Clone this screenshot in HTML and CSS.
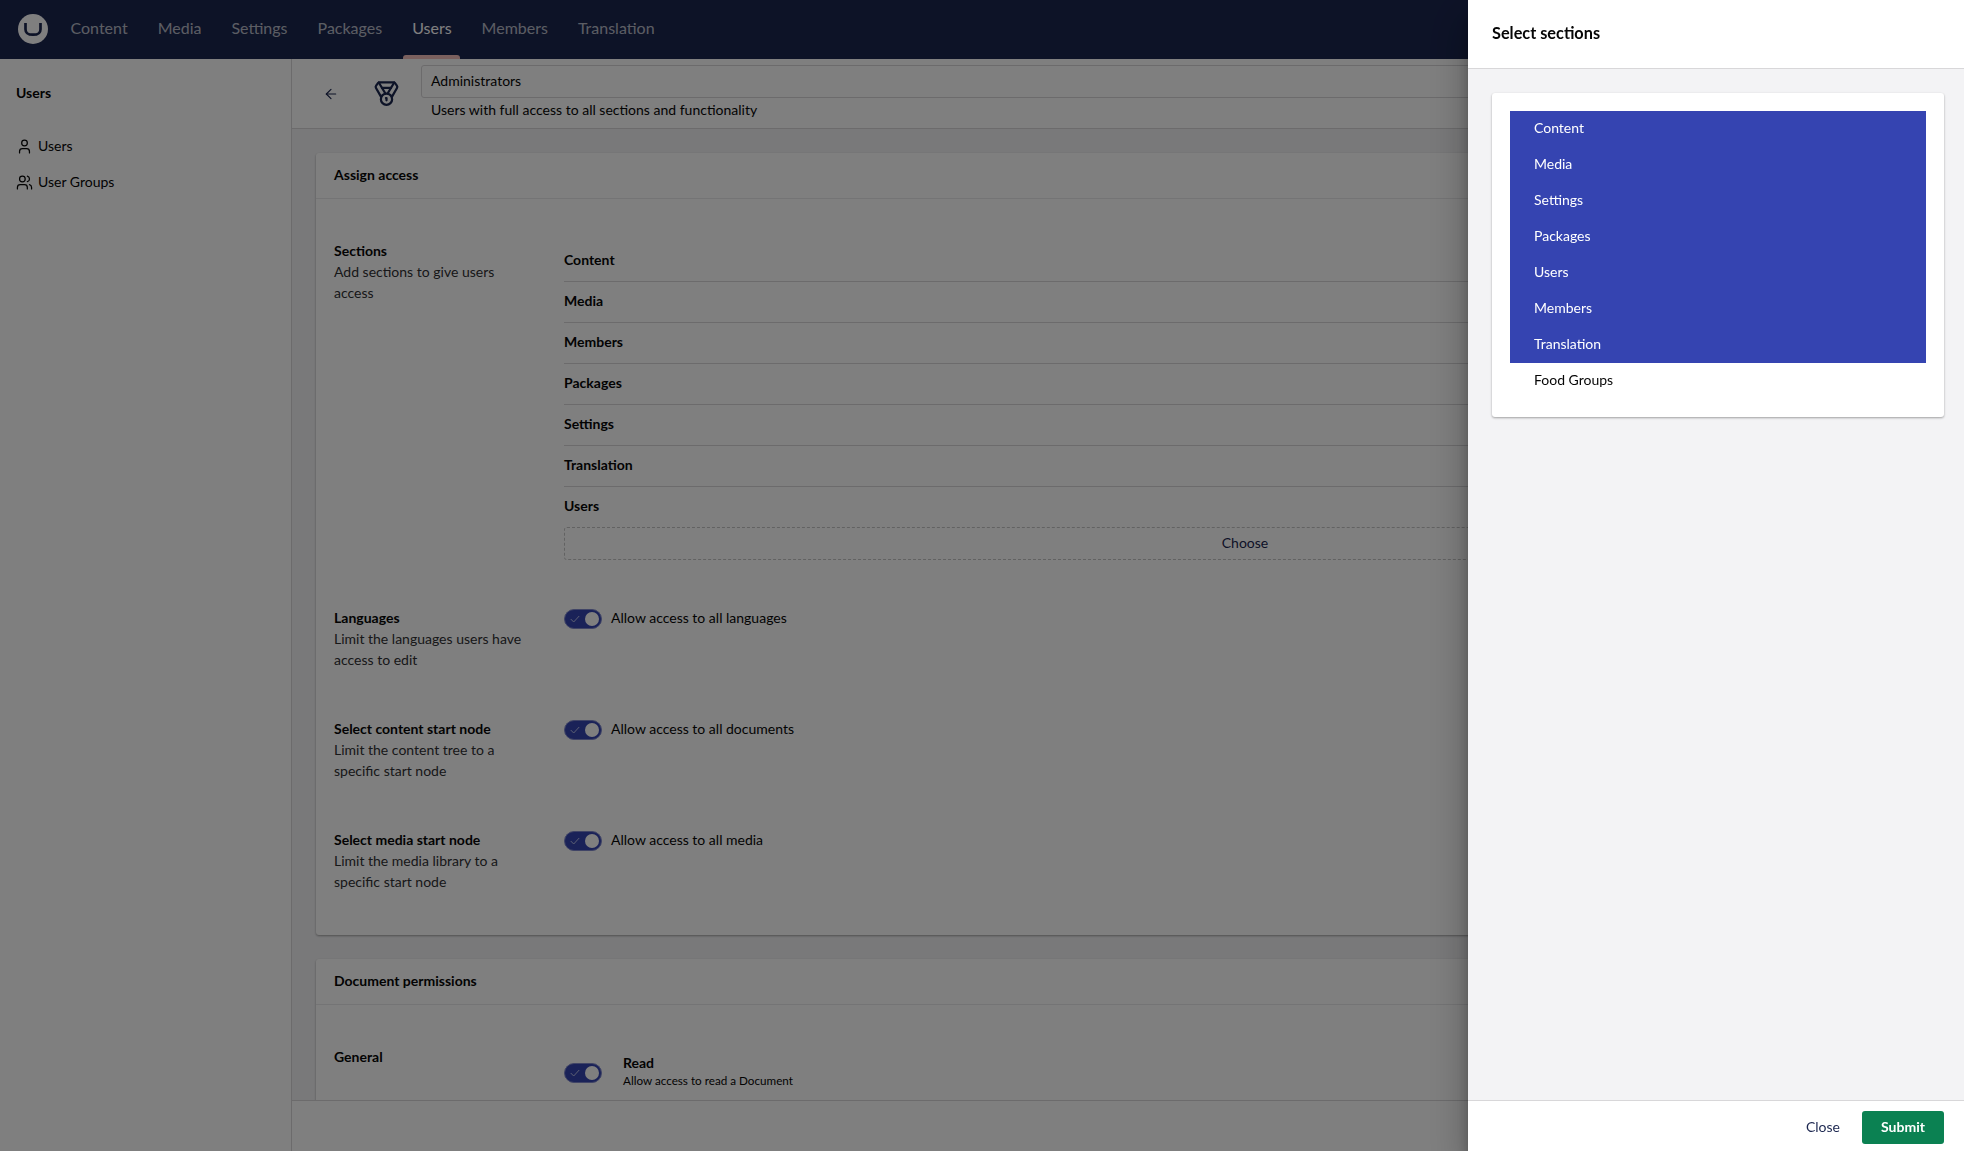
FILE: index.html
```html
<!DOCTYPE html>
<html lang="en">
<head>
    <meta charset="UTF-8">
    <meta name="viewport" content="width=device-width, initial-scale=1.0">
    <title>Administrators - User Groups</title>
    <link rel="stylesheet" href="styles.css">
</head>
<body>
    <div class="app">
        <header class="app-header">
            <svg class="logo" viewBox="0 0 30 30">
                <circle cx="15" cy="15" r="15" fill="#fff"/>
                <path d="M7.5 9v6.2c0 4.300 2.300 5.500 7.500 5.500s7.500-1.200 7.500-5.500V9" fill="none" stroke="#1b264f" stroke-width="2.700"/>
            </svg>
            <nav class="sections">
                <a class="tab">Content</a>
                <a class="tab">Media</a>
                <a class="tab">Settings</a>
                <a class="tab">Packages</a>
                <a class="tab active">Users</a>
                <a class="tab">Members</a>
                <a class="tab">Translation</a>
            </nav>
        </header>

        <div class="app-body">
            <aside class="sidebar">
                <h3>Users</h3>
                <a class="menu-item">
                    <svg class="icon" viewBox="0 0 24 24"><path d="M19 21v-2a4 4 0 0 0-4-4H9a4 4 0 0 0-4 4v2"/><circle cx="12" cy="7" r="4"/></svg>
                    Users
                </a>
                <a class="menu-item">
                    <svg class="icon" viewBox="0 0 24 24"><path d="M16 21v-2a4 4 0 0 0-4-4H6a4 4 0 0 0-4 4v2"/><circle cx="9" cy="7" r="4"/><path d="M22 21v-2a4 4 0 0 0-3-3.870"/><path d="M16 3.130a4 4 0 0 1 0 7.750"/></svg>
                    User Groups
                </a>
            </aside>

            <main class="workspace">
                <div class="workspace-header">
                    <svg class="icon back" viewBox="0 0 24 24"><path d="m12 19-7-7 7-7"/><path d="M19 12H5"/></svg>
                    <svg class="icon medal" viewBox="0 0 24 24"><path d="M7.210 15 2.660 7.140a2 2 0 0 1 .13-2.200L4.400 2.800A2 2 0 0 1 6 2h12a2 2 0 0 1 1.600.8l1.600 2.140a2 2 0 0 1 .14 2.200L16.790 15"/><path d="M11 12 5.120 2.200"/><path d="m13 12 5.880-9.800"/><path d="M8 7h8"/><circle cx="12" cy="17" r="5"/><path d="M12 18v-2h-.5"/></svg>
                    <div class="names">
                        <div class="name-input">Administrators</div>
                        <div class="name-description">Users with full access to all sections and functionality</div>
                    </div>
                </div>

                <div class="editor">
                    <section class="box">
                        <h4 class="box-title">Assign access</h4>
                        <div class="box-body">
                            <div class="property">
                                <div class="property-label">
                                    <b>Sections</b>
                                    <p>Add sections to give users access</p>
                                </div>
                                <div class="property-editor">
                                    <ul class="ref-list">
                                        <li>Content</li>
                                        <li>Media</li>
                                        <li>Members</li>
                                        <li>Packages</li>
                                        <li>Settings</li>
                                        <li>Translation</li>
                                        <li>Users</li>
                                    </ul>
                                    <div class="choose">Choose</div>
                                </div>
                            </div>
                            <div class="property">
                                <div class="property-label">
                                    <b>Languages</b>
                                    <p>Limit the languages users have access to edit</p>
                                </div>
                                <div class="property-editor">
                                    <div class="toggle-row">
                                        <span class="toggle"><svg viewBox="0 0 10 8"><path d="m.7 4 3 3 5.500-6"/></svg></span>
                                        Allow access to all languages
                                    </div>
                                </div>
                            </div>
                            <div class="property">
                                <div class="property-label">
                                    <b>Select content start node</b>
                                    <p>Limit the content tree to a specific start node</p>
                                </div>
                                <div class="property-editor">
                                    <div class="toggle-row">
                                        <span class="toggle"><svg viewBox="0 0 10 8"><path d="m.7 4 3 3 5.500-6"/></svg></span>
                                        Allow access to all documents
                                    </div>
                                </div>
                            </div>
                            <div class="property">
                                <div class="property-label">
                                    <b>Select media start node</b>
                                    <p>Limit the media library to a specific start node</p>
                                </div>
                                <div class="property-editor">
                                    <div class="toggle-row">
                                        <span class="toggle"><svg viewBox="0 0 10 8"><path d="m.7 4 3 3 5.500-6"/></svg></span>
                                        Allow access to all media
                                    </div>
                                </div>
                            </div>
                        </div>
                    </section>

                    <section class="box">
                        <h4 class="box-title">Document permissions</h4>
                        <div class="box-body">
                            <div class="property">
                                <div class="property-label">
                                    <b>General</b>
                                </div>
                                <div class="property-editor">
                                    <div class="permission">
                                        <span class="toggle"><svg viewBox="0 0 10 8"><path d="m.7 4 3 3 5.500-6"/></svg></span>
                                        <div class="permission-text">
                                            <b>Read</b>
                                            <small>Allow access to read a Document</small>
                                        </div>
                                    </div>
                                </div>
                            </div>
                        </div>
                    </section>
                </div>

                <div class="workspace-footer"></div>
            </main>
        </div>
    </div>

    <div class="backdrop"></div>

    <div class="drawer">
        <h3 class="drawer-header">Select sections</h3>
        <div class="drawer-body">
            <div class="box picker">
                <div class="option selected">Content</div>
                <div class="option selected">Media</div>
                <div class="option selected">Settings</div>
                <div class="option selected">Packages</div>
                <div class="option selected">Users</div>
                <div class="option selected">Members</div>
                <div class="option selected">Translation</div>
                <div class="option">Food Groups</div>
            </div>
        </div>
        <div class="drawer-footer">
            <button class="btn">Close</button>
            <button class="btn btn-positive">Submit</button>
        </div>
    </div>
</body>
</html>
```
FILE: styles.css
```css
* {
    box-sizing: border-box;
}

body {
    margin: 0;
    font-family: Lato, sans-serif;
    font-size: 14px;
    line-height: 21px;
    color: #060606;
    overflow: hidden;
}

h3, h4, p, ul {
    margin: 0;
    padding: 0;
}

.app {
    display: flex;
    flex-direction: column;
    height: 100vh;
}

.app-header {
    display: flex;
    align-items: center;
    flex: 0 0 59px;
    padding-left: 18px;
    background-color: #1b264f;
}

.logo {
    width: 30px;
    height: 30px;
    margin-bottom: 1px;
}

.sections {
    display: flex;
    height: 100%;
    margin-left: 7.5px;
}

.tab {
    position: relative;
    display: flex;
    align-items: center;
    padding: 0 15px 4px;
    font-size: 16px;
    color: rgba(255, 255, 255, 0.7);
}

.tab.active {
    color: #fff;
}

.tab.active::after {
    content: "";
    position: absolute;
    left: 6px;
    right: 7px;
    bottom: 0;
    height: 4px;
    border-radius: 3px 3px 0 0;
    background-color: #f5c1bc;
}

.app-body {
    display: flex;
    flex: 1;
    min-height: 0;
}

.sidebar {
    flex: 0 0 292px;
    border-right: 1px solid #d8d7d9;
    background-color: #fff;
}

.sidebar h3 {
    height: 68px;
    padding: 23px 16px 0;
    font-size: 14px;
}

.menu-item {
    display: flex;
    align-items: center;
    gap: 5px;
    height: 36px;
    padding-left: 16px;
}

.icon {
    fill: none;
    stroke: currentColor;
    stroke-width: 1.75;
    stroke-linecap: round;
    stroke-linejoin: round;
}

.menu-item .icon {
    width: 17px;
    height: 17px;
    margin-top: 3px;
}

.workspace {
    display: flex;
    flex-direction: column;
    flex: 1;
    min-width: 0;
    background-color: #f3f3f5;
}

.workspace-header {
    display: flex;
    align-items: center;
    flex: 0 0 70px;
    padding: 0 20px 0 31px;
    border-bottom: 1px solid #d8d7d9;
    background-color: #fff;
    color: #1b264f;
}

.back {
    width: 16px;
    height: 16px;
}

.medal {
    width: 27px;
    height: 27px;
    margin: 0 21px 0 34px;
    stroke-width: 2;
}

.names {
    flex: 1;
    height: 57px;
    color: #060606;
}

.name-input {
    height: 33px;
    padding: 4px 9px;
    border: 1px solid #d8d7d9;
    border-radius: 3px;
}

.name-description {
    padding: 1px 10px 0;
}

.editor {
    flex: 1;
    min-height: 0;
    padding: 24px 20px 0 24px;
    overflow: hidden;
}

.box {
    margin-bottom: 24px;
    border-radius: 3px;
    background-color: #fff;
    box-shadow: 0 1px 3px rgba(0, 0, 0, 0.12), 0 1px 2px rgba(0, 0, 0, 0.24);
}

.box-title {
    height: 46px;
    padding: 11px 18px;
    border-bottom: 1px solid #e9e9eb;
    font-size: 14px;
}

.box-body {
    padding: 18px;
}

.property {
    display: grid;
    grid-template-columns: 200px 1fr;
    column-gap: 30px;
    padding: 23px 0 25px;
}

.property-label p {
    color: #303033;
}

.ref-list {
    margin-top: 1px;
    list-style: none;
    font-weight: bold;
}

.ref-list li {
    height: 41px;
    padding-top: 8px;
    border-bottom: 1px solid #d8d7d9;
}

.ref-list li:last-child {
    height: 40px;
    border-bottom: none;
}

.choose {
    height: 33px;
    margin-bottom: -1px;
    border: 1px dashed #c4c4c4;
    border-radius: 3px;
    line-height: 29px;
    text-align: center;
    color: #1b264f;
}

.toggle-row {
    display: flex;
    align-items: flex-start;
    gap: 9px;
}

.toggle {
    position: relative;
    flex: none;
    display: block;
    width: 38px;
    height: 20px;
    border: 1px solid #8089cc;
    border-radius: 10px;
    background-color: #3544b1;
}

.toggle-row .toggle {
    margin-top: 2px;
}

.toggle svg {
    position: absolute;
    left: 5px;
    top: 5px;
    width: 10px;
    height: 8px;
    fill: none;
    stroke: #b9bfe6;
}

.toggle::after {
    content: "";
    position: absolute;
    right: 2px;
    top: 2px;
    width: 14px;
    height: 14px;
    border-radius: 50%;
    background-color: #fff;
}

.permission {
    display: flex;
    align-items: center;
    gap: 21px;
    padding-top: 6px;
}

.permission .toggle {
    margin-top: 6px;
}

.permission-text {
    display: flex;
    flex-direction: column;
}

.permission-text small {
    font-size: 11.7px;
    line-height: 15px;
}

.workspace-footer {
    flex: 0 0 51px;
    border-top: 1px solid #d8d7d9;
    background-color: #fff;
}

.backdrop {
    position: fixed;
    inset: 0;
    background-color: rgba(0, 0, 0, 0.5);
}

.drawer {
    position: fixed;
    top: 0;
    right: 0;
    bottom: 0;
    display: flex;
    flex-direction: column;
    width: 496px;
    background-color: #f3f3f5;
    box-shadow: 0 19px 38px rgba(0, 0, 0, 0.3), 0 15px 12px rgba(0, 0, 0, 0.22);
}

.drawer-header {
    height: 69px;
    padding: 22px 24px;
    border-bottom: 1px solid #d8d7d9;
    background-color: #fff;
    font-size: 16.3px;
}

.drawer-body {
    flex: 1;
    padding: 24px 20px 24px 24px;
}

.picker {
    padding: 18px;
}

.option {
    height: 36px;
    padding: 6px 24px;
}

.option.selected {
    background-color: #3544b1;
    color: #fff;
}

.drawer-footer {
    display: flex;
    justify-content: flex-end;
    align-items: center;
    height: 51px;
    padding: 3px 20px 0 0;
    border-top: 1px solid #d8d7d9;
    background-color: #fff;
}

.btn {
    height: 33px;
    padding: 0 22px 2px;
    border: none;
    border-radius: 3px;
    background: none;
    font: inherit;
    color: #1b264f;
}

.btn-positive {
    width: 82px;
    padding: 0 0 2px;
    background-color: #0b8152;
    font-weight: bold;
    color: #fff;
}
```
